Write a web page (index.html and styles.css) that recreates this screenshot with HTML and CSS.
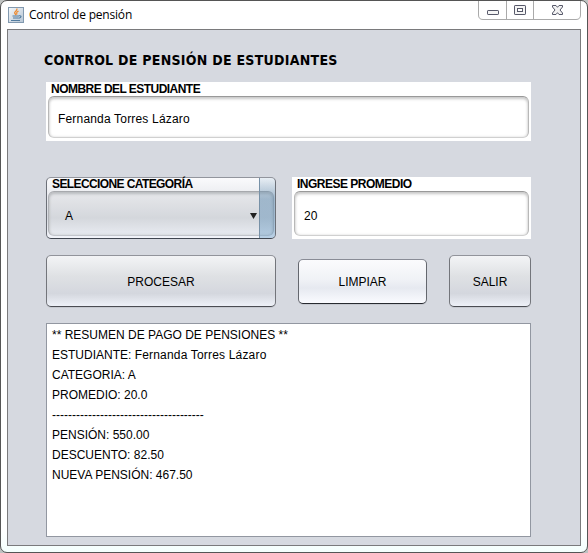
FILE: index.html
```html
<!DOCTYPE html>
<html lang="es">
<head>
<meta charset="utf-8">
<title>Control de pensión</title>
<link rel="stylesheet" href="styles.css">
</head>
<body>
<div class="window">
  <header class="titlebar">
    <svg class="java" width="16" height="16" viewBox="0 0 16 16">
      <defs><linearGradient id="tile" x2="1" y2="1"><stop stop-color="#f5f8fa"/><stop offset="1" stop-color="#b6c5d4"/></linearGradient></defs>
      <rect x=".5" y=".5" width="15" height="15" fill="url(#tile)" stroke="#8299af"/>
      <path d="M8.8 1.5C10 4 5.8 4.200 6.700 6.200L8 8M10.500 4.200C8 5.300 8.500 6 9 7.500" fill="none" stroke="#ed8b31" stroke-width="1.300"/>
      <path d="M4.500 9h6.500M5 11h5.500M3 13.500h9M11 8.800c3-.5 2.500 2-.3 2.500" fill="none" stroke="#527c9f" stroke-width="1.100"/>
    </svg>
    <span class="caption">Control de pensión</span>
    <div class="controls">
      <svg width="108" height="20" viewBox="0 0 108 20">
        <path d="M.5 0V14Q.5 18.500 5 18.500H98Q102.500 18.500 102.500 14V0M28.500 0V18M55.500 0V18" fill="none" stroke="#aaa"/>
        <rect x="9.500" y="9.500" width="11" height="4" rx=".6" fill="#f5f5f5" stroke="#555768"/>
        <rect x="36.500" y="4.500" width="11" height="9" rx=".6" fill="#f5f5f5" stroke="#555768"/>
        <rect x="39.500" y="7.500" width="5" height="3" fill="#fff" stroke="#555768"/>
        <path d="M74.500 4.500H78L79.500 6.300 81 4.500H84.500V6L82 9 84.500 12V13.500H81L79.500 11.700 78 13.500H74.500V12L77 9 74.500 6Z" fill="#f3f3f3" stroke="#555768"/>
      </svg>
    </div>
  </header>
  <main class="content">
    <h1>CONTROL DE PENSIÓN DE ESTUDIANTES</h1>
    <section class="field name">
      <div class="legend"><span class="l-name">NOMBRE DEL ESTUDIANTE</span></div>
      <div class="inset">Fernanda Torres Lázaro</div>
    </section>
    <div class="row fields">
      <section class="combo">
        <div class="legend"><span class="l-cat">SELECCIONE CATEGORÍA</span></div>
        <div class="inset">A<svg class="arrow" width="7" height="6" viewBox="0 0 7 6"><path d="M0 0H7L3.500 6Z" fill="#202020"/></svg></div>
        <div class="strip"></div>
      </section>
      <section class="field grade">
        <div class="legend"><span class="l-grade">INGRESE PROMEDIO</span></div>
        <div class="inset">20</div>
      </section>
    </div>
    <div class="row buttons">
      <button class="process">PROCESAR</button>
      <button class="clear">LIMPIAR</button>
      <button class="exit">SALIR</button>
    </div>
    <div class="summary">
      <div>** RESUMEN DE PAGO DE PENSIONES **</div>
      <div>ESTUDIANTE: <span class="student">Fernanda Torres Lázaro</span></div>
      <div>CATEGORIA: A</div>
      <div>PROMEDIO: 20.0</div>
      <div>--------------------------------------</div>
      <div>PENSIÓN: 550.00</div>
      <div>DESCUENTO: 82.50</div>
      <div>NUEVA PENSIÓN: 467.50</div>
    </div>
  </main>
</div>
</body>
</html>
```
FILE: styles.css
```css
* { box-sizing: border-box; }
html, body { margin: 0; overflow: hidden; }
body { width: 588px; height: 553px; background: #bfc2c1; font: 12px/14px "Liberation Sans", Arial, sans-serif; color: #000; }
.window { width: 588px; height: 553px; padding: 0 6px 6px; border: 1px solid #555; border-radius: 7px; background: linear-gradient(#fff 96%, #f4fffd); }
.titlebar { display: flex; height: 28px; padding-left: 1px; }
.java { margin-top: 6px; }
.caption { margin: 6px 0 0 5px; font: 12px/16px "Open Sans", "Noto Sans", sans-serif; white-space: nowrap; letter-spacing: -.2px; }
.controls { width: 108px; height: 20px; margin-left: auto; margin-right: -5px; }
.controls svg { display: block; }
.content { height: 517px; border: 1px solid #7a7a7c; background: #d6d9e0; padding: 22px 49px 0 38px; }
h1 { margin: 0 0 0 -2px; height: 30px; font: bold 14px/17px "DejaVu Sans Condensed", "DejaVu Sans", sans-serif; white-space: nowrap; letter-spacing: .27px; }
.field { background: #fff; padding: 0 2px; }
.name { height: 59px; }
.legend { height: 14px; padding-left: 3px; font-weight: bold; line-height: 14px; white-space: nowrap; }
.l-name { letter-spacing: -.54px; }
.l-cat { letter-spacing: -.6px; }
.l-grade { letter-spacing: -.5px; }
.inset { display: flex; align-items: center; height: 42px; padding: 3px 10px 0 9px; border: 1px solid #b8b8b8; border-top-color: #999; border-bottom-color: #d0d0d0; border-radius: 6px; box-shadow: inset 0 2px 3px #c8c8c8, inset 0 0 3px #ddd; }
.name .inset, .student { letter-spacing: .18px; }
.row { display: flex; }
.fields { margin-top: 36px; gap: 16px; }
.combo { position: relative; width: 230px; height: 62px; padding: 0 1px; border: 1px solid #6c7078; border-top-color: #92959d; border-bottom-color: #404650; border-radius: 5px; background: linear-gradient(#fafafc 0, #e1e3e8 45%, #d6d9df 65%, #f2f4fa); }
.combo .legend { height: 13px; padding-left: 4px; line-height: 12px; }
.combo .inset { height: 45px; padding: 5px 16px 0; border-color: #a7a9ad #b0b2b7 #c2c5cb; background: linear-gradient(#e7e8eb, #d4d7dc 60%, #e8ebf1); box-shadow: inset 0 2px 3px #b9bbbe, inset 0 0 3px #c7c9cd; }
.arrow { margin-left: auto; }
.strip { position: absolute; right: 0; top: 0; width: 16px; height: 100%; border-left: 1px solid #7791a7; border-radius: 0 4px 4px 0; background: linear-gradient(rgba(105,155,190,.12), rgba(88,135,173,.48) 35%, rgba(105,158,201,.42)); }
.grade { width: 239px; height: 62px; }
.grade .inset { height: 45px; padding-top: 5px; }
.buttons { height: 52px; margin-top: 16px; align-items: center; }
button { height: 52px; padding: 1px 0 0; border: 1px solid #73757b; border-top-color: #92949b; border-bottom-color: #4b4d53; border-radius: 5px; background: linear-gradient(#f3f4f6, #dfe1e4 40%, #d4d7de 75%, #eef1f8); box-shadow: 0 1px #c6c9d0; color: #000; font: inherit; }
.process { width: 230px; }
.clear { width: 129px; height: 45px; margin: 0 22px; background: linear-gradient(#fbfbfd, #f0f2f6 45%, #e6e9f0 65%, #fafbff); border-color: #898c96 #64676e #272a30; }
.exit { width: 82px; }
.summary { height: 214px; margin-top: 16px; padding: 1px 5px; border: 1px solid #9297a1; background: #fff; line-height: 20px; white-space: nowrap; }
```
